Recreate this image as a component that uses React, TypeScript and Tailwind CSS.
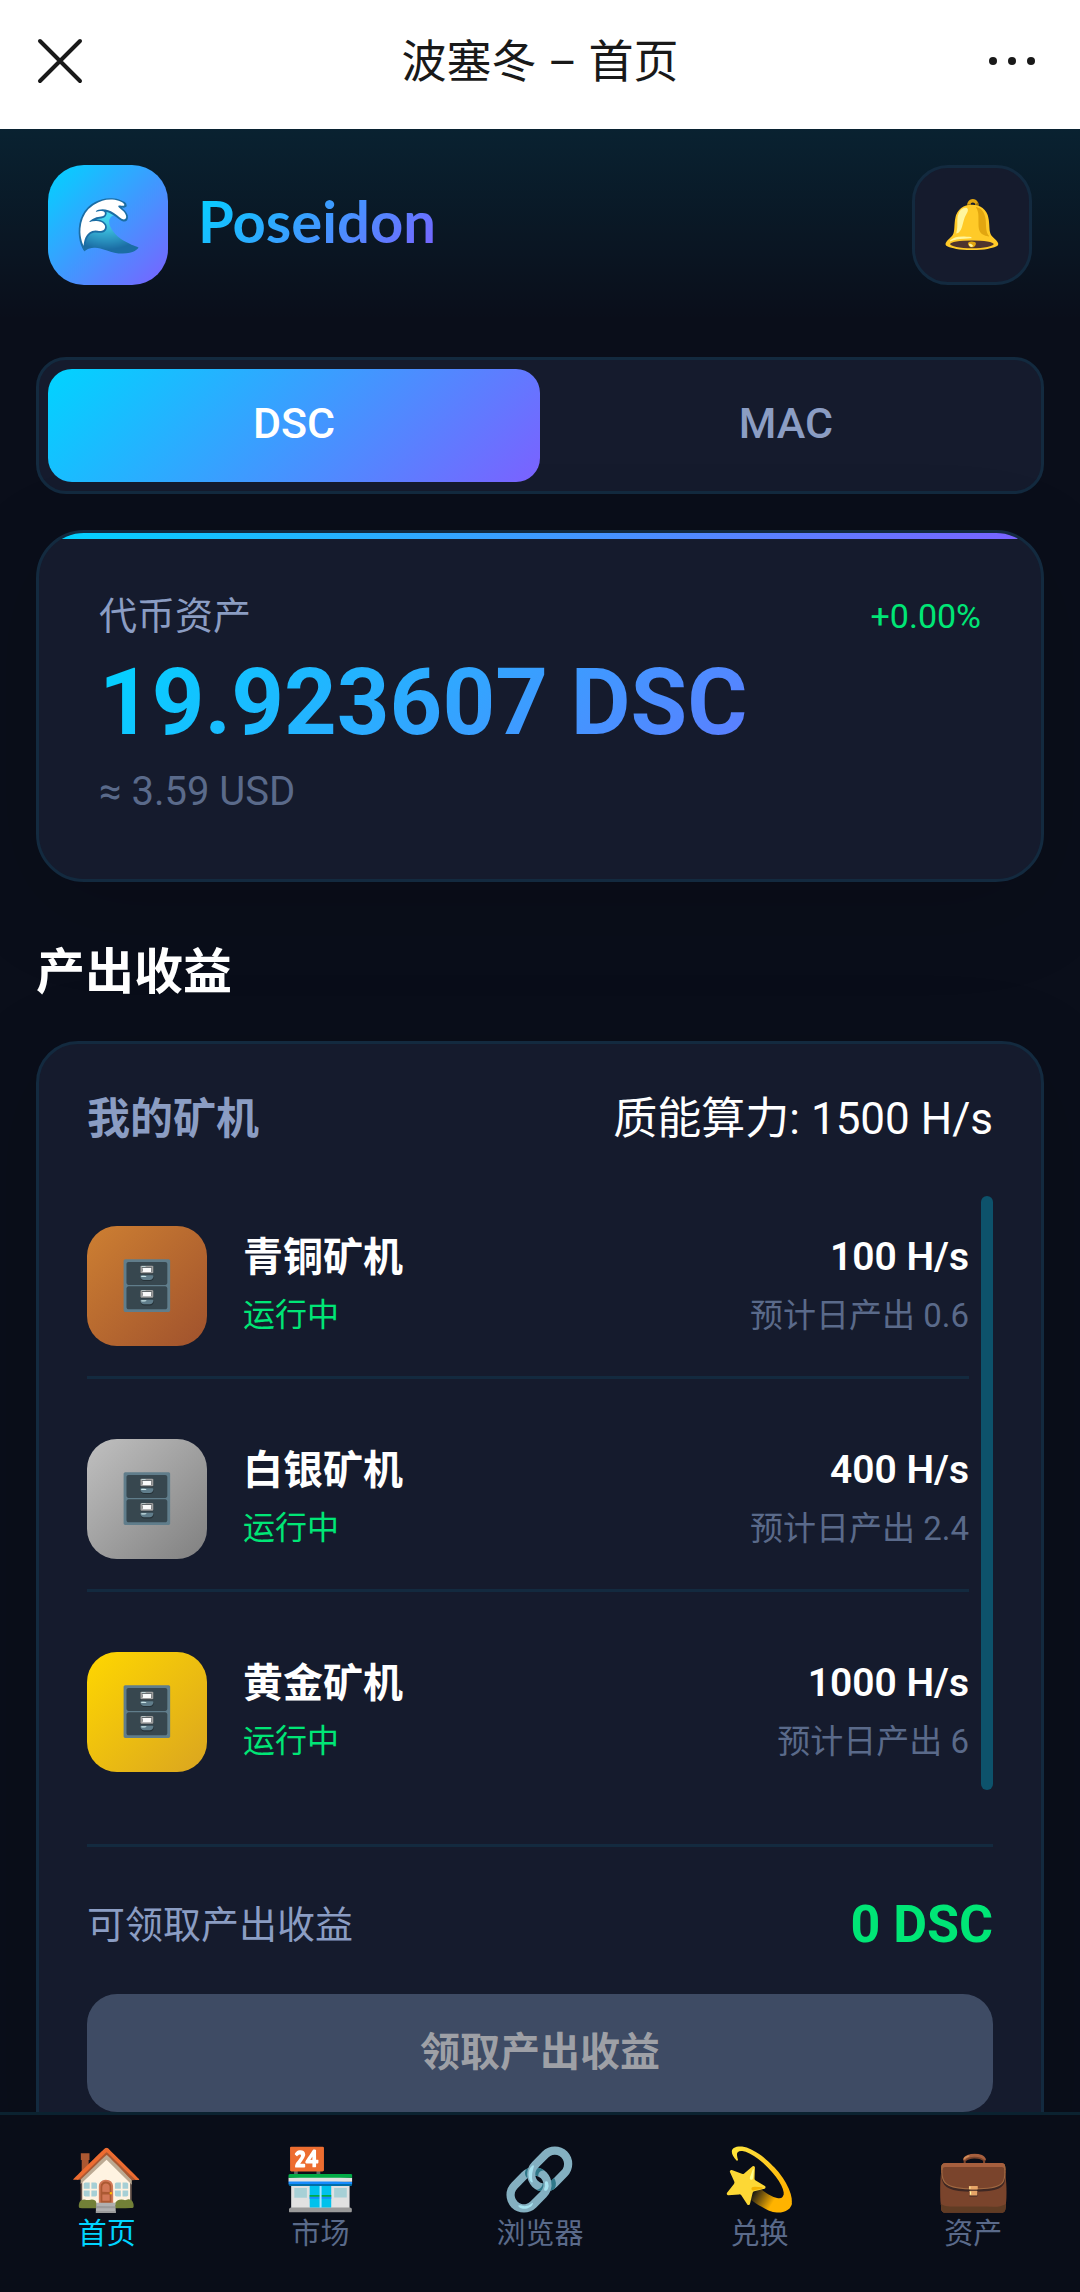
import { useState } from 'react';
import clsx from 'clsx';

const miners = [
  { name: '青铜矿机', power: '100 H/s', daily: '0.6', tile: 'from-[#cd7f32] to-[#a0522d]' },
  { name: '白银矿机', power: '400 H/s', daily: '2.4', tile: 'from-[#c0c0c0] to-[#808080]' },
  { name: '黄金矿机', power: '1000 H/s', daily: '6', tile: 'from-[#ffd700] to-[#daa520]' },
];

const tabs = [
  { icon: '🏠', label: '首页' },
  { icon: '🏪', label: '市场' },
  { icon: '🔗', label: '浏览器' },
  { icon: '💫', label: '兑换' },
  { icon: '💼', label: '资产' },
];

function TitleBar() {
  return (
    <div className="flex shrink-0 items-center justify-between bg-white px-9 pt-7 pb-9 text-[#191919]">
      <button aria-label="关闭" className="w-14">
        <svg viewBox="0 0 48 48" className="size-12" fill="none" stroke="currentColor" strokeWidth="4" strokeLinecap="round">
          <path d="M4 4l40 40M44 4L4 44" />
        </svg>
      </button>
      <h1 className="pt-1 text-[45px] leading-[61px]">波塞冬 – 首页</h1>
      <button aria-label="更多" className="w-14">
        <svg viewBox="0 0 48 48" className="size-12" fill="currentColor">
          <circle cx="5" cy="24" r="4" />
          <circle cx="24" cy="24" r="4" />
          <circle cx="43" cy="24" r="4" />
        </svg>
      </button>
    </div>
  );
}

function Header() {
  return (
    <header className="flex items-center justify-between bg-linear-to-b from-[#00d4ff]/10 to-transparent px-12 py-9">
      <div className="flex items-center gap-[30px]">
        <div className="flex size-[120px] items-center justify-center rounded-[36px] bg-linear-135/srgb from-[#00d4ff] to-[#7b61ff] text-[54px]">
          🌊
        </div>
        <span className='mb-2 bg-linear-135/srgb from-[#00d4ff] to-[#7b61ff] bg-clip-text font-["Lato"] text-[58px] leading-[72px] font-bold text-transparent'>
          Poseidon
        </span>
      </div>
      <button aria-label="通知" className="flex size-[120px] items-center justify-center rounded-[36px] border-3 border-[#132a3f] bg-[#151b2d] text-5xl">
        🔔
      </button>
    </header>
  );
}

function CoinSwitch() {
  const [coin, setCoin] = useState('DSC');
  return (
    <div className="flex rounded-[30px] border-3 border-[#132a3f] bg-[#151b2d] p-[9px]">
      {['DSC', 'MAC'].map((c) => (
        <button
          key={c}
          onClick={() => setCoin(c)}
          className={clsx(
            'flex-1 rounded-3xl pt-[26px] pb-[30px] text-[43px] leading-[57px] font-medium',
            c === coin ? 'bg-linear-135/srgb from-[#00d4ff] to-[#7b61ff] text-white' : 'text-[#8b9dc3]',
          )}
        >
          {c}
        </button>
      ))}
    </div>
  );
}

function AssetCard() {
  return (
    <section className="mt-9 overflow-hidden rounded-[48px] border-3 border-[#132a3f] bg-[#151b2d] shadow-[0_24px_96px_rgba(0,0,0,0.15)]">
      <div className="h-1.5 bg-linear-to-r/srgb from-[#00d4ff] to-[#7b61ff]" />
      <div className="px-[60px] pt-[54px] pb-[58px]">
        <div className="flex items-center justify-between leading-[46px]">
          <span className="text-[38px] text-[#8b9dc3]">代币资产</span>
          <span className="text-[34px] text-[#00e676]">+0.00%</span>
        </div>
        <p className="mt-2.5 bg-linear-135/srgb from-[#00d4ff] to-[#7b61ff] bg-clip-text text-[92px] leading-[108px] font-bold text-transparent">
          19.923607 DSC
        </p>
        <p className="mt-1.5 text-[40px] leading-[58px] text-[#5a6a8a]">≈ 3.59 USD</p>
      </div>
    </section>
  );
}

function MinerCard() {
  return (
    <section className="rounded-[42px] border-3 border-[#132a3f] bg-[#151b2d] p-12 shadow-[0_24px_96px_rgba(0,0,0,0.15)]">
      <div className="flex items-center justify-between leading-[54px]">
        <h3 className="text-[43px] font-semibold text-[#8b9dc3]">我的矿机</h3>
        <span className="text-[44px] text-white">质能算力: 1500 H/s</span>
      </div>

      <div className="mt-[50px] flex gap-3">
        <ul className="flex flex-1 flex-col gap-[30px]">
          {miners.map((m) => (
            <li
              key={m.name}
              className="flex items-center border-b-3 border-[#132a3f] py-[30px] last:border-b-0 last:pb-[18px]"
            >
              <div className={clsx('flex size-[120px] items-center justify-center rounded-[30px] bg-linear-135/srgb text-5xl', m.tile)}>
                🗄️
              </div>
              <div className="mb-0.5 ml-9 flex-1">
                <p className="text-[40px] leading-[60px] font-semibold text-white">{m.name}</p>
                <p className="text-[32px] leading-[54px] text-[#00e676]">运行中</p>
              </div>
              <div className="text-right">
                <p className="text-[39px] leading-[60px] font-semibold text-white">{m.power}</p>
                <p className="text-[33px] leading-[58px] text-[#5a6a8a]">预计日产出 {m.daily}</p>
              </div>
            </li>
          ))}
        </ul>
        <div className="w-3 rounded-full bg-[#0d526b]" />
      </div>

      <div className="mt-[54px] border-t-3 border-[#132a3f] pt-12">
        <div className="flex items-center justify-between leading-[60px]">
          <span className="text-[38px] text-[#8b9dc3]">可领取产出收益</span>
          <span className="text-[52px] font-bold text-[#00e676]">0 DSC</span>
        </div>
        <button disabled className="mt-[39px] w-full rounded-[30px] bg-[#3e4b64] py-[30px] text-[40px] leading-[58px] font-semibold text-[#9ea0a6]">
          领取产出收益
        </button>
      </div>
    </section>
  );
}

function TabBar() {
  return (
    <nav className="flex shrink-0 justify-around border-t-3 border-[#0b2230] bg-[#090d18] pt-[30px] pb-[38px]">
      {tabs.map((t, i) => (
        <a
          key={t.label}
          href="#"
          className={clsx('flex flex-col items-center', i === 0 ? 'text-[#00d4ff]' : 'text-[#5a6a8a]')}
        >
          <span className="text-6xl leading-[70px]">{t.icon}</span>
          <span className="text-[29px] leading-[39px]">{t.label}</span>
        </a>
      ))}
    </nav>
  );
}

export default function App() {
  return (
    <div className='flex h-screen flex-col bg-[#0a0e1a] font-["Roboto","Noto_Sans_CJK_SC",sans-serif]'>
      <TitleBar />
      <div className="min-h-0 flex-1 overflow-y-auto [scrollbar-width:none]">
        <Header />
        <main className="p-9">
          <CoinSwitch />
          <AssetCard />
          <h2 className="mt-[61px] mb-[38px] text-[49px] leading-[60px] font-semibold text-white">产出收益</h2>
          <MinerCard />
        </main>
      </div>
      <TabBar />
    </div>
  );
}
